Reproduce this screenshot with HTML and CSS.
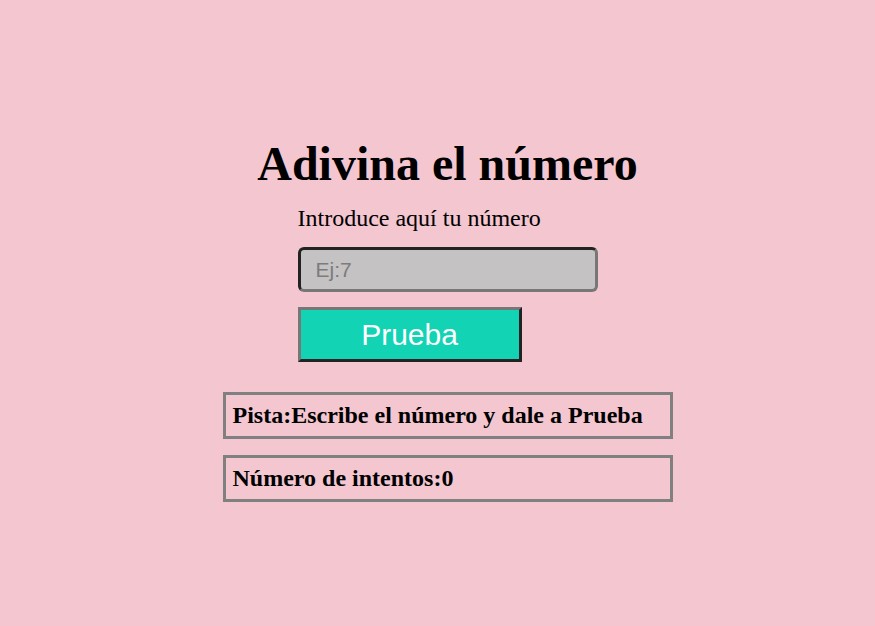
FILE: index.html
```html
<!DOCTYPE html>
<html lang="es">
<head>
<meta charset="utf-8">
<title>Adivina el número</title>
<link rel="stylesheet" href="styles.css">
</head>
<body>
<main class="page">
  <h1 class="title">Adivina el número</h1>
  <form class="form">
    <label class="label" for="num">Introduce aquí tu número</label>
    <input class="input" id="num" type="text" placeholder="Ej:7">
    <button class="btn" type="button">Prueba</button>
  </form>
  <div class="box">Pista:Escribe el número y dale a Prueba</div>
  <div class="box">Número de intentos:0</div>
</main>
</body>
</html>
```
FILE: styles.css
```css
html, body {
  margin: 0;
  padding: 0;
  background: #f4c6d0;
  font-family: "Liberation Serif", "Times New Roman", serif;
  color: #000;
}
.page {
  display: flex;
  flex-direction: column;
  align-items: center;
  padding-top: 136px;
  padding-left: 20px;
}
.title {
  margin: 0;
  font-size: 48px;
  font-weight: bold;
  line-height: 56px;
}
.form {
  width: 300px;
  display: flex;
  flex-direction: column;
  align-items: flex-start;
  margin-top: 12px;
}
.label {
  font-size: 24px;
  line-height: 28px;
}
.input {
  box-sizing: border-box;
  width: 300px;
  height: 45px;
  margin-top: 15px;
  padding: 0 15px;
  background: #c4c2c3;
  border: 3px solid;
  border-color: #222 #777 #777 #222;
  border-radius: 6px;
  font-family: "Liberation Sans", Arial, sans-serif;
  font-size: 21px;
  color: #333;
  outline: none;
}
.input::placeholder {
  color: #7d7b7c;
}
.btn {
  box-sizing: border-box;
  width: 224px;
  height: 55px;
  margin-top: 15px;
  background: #12d3b4;
  border: 3px solid;
  border-color: #777 #222 #222 #777;
  font-family: "Liberation Sans", Arial, sans-serif;
  font-size: 30px;
  color: #fff;
  padding: 0;
}
.box {
  box-sizing: border-box;
  width: 450px;
  height: 47px;
  border: 3px solid #808080;
  padding: 0 7px;
  display: flex;
  align-items: center;
  font-size: 24px;
  font-weight: bold;
  margin-top: 16px;
}
.form + .box {
  margin-top: 30px;
}
```
